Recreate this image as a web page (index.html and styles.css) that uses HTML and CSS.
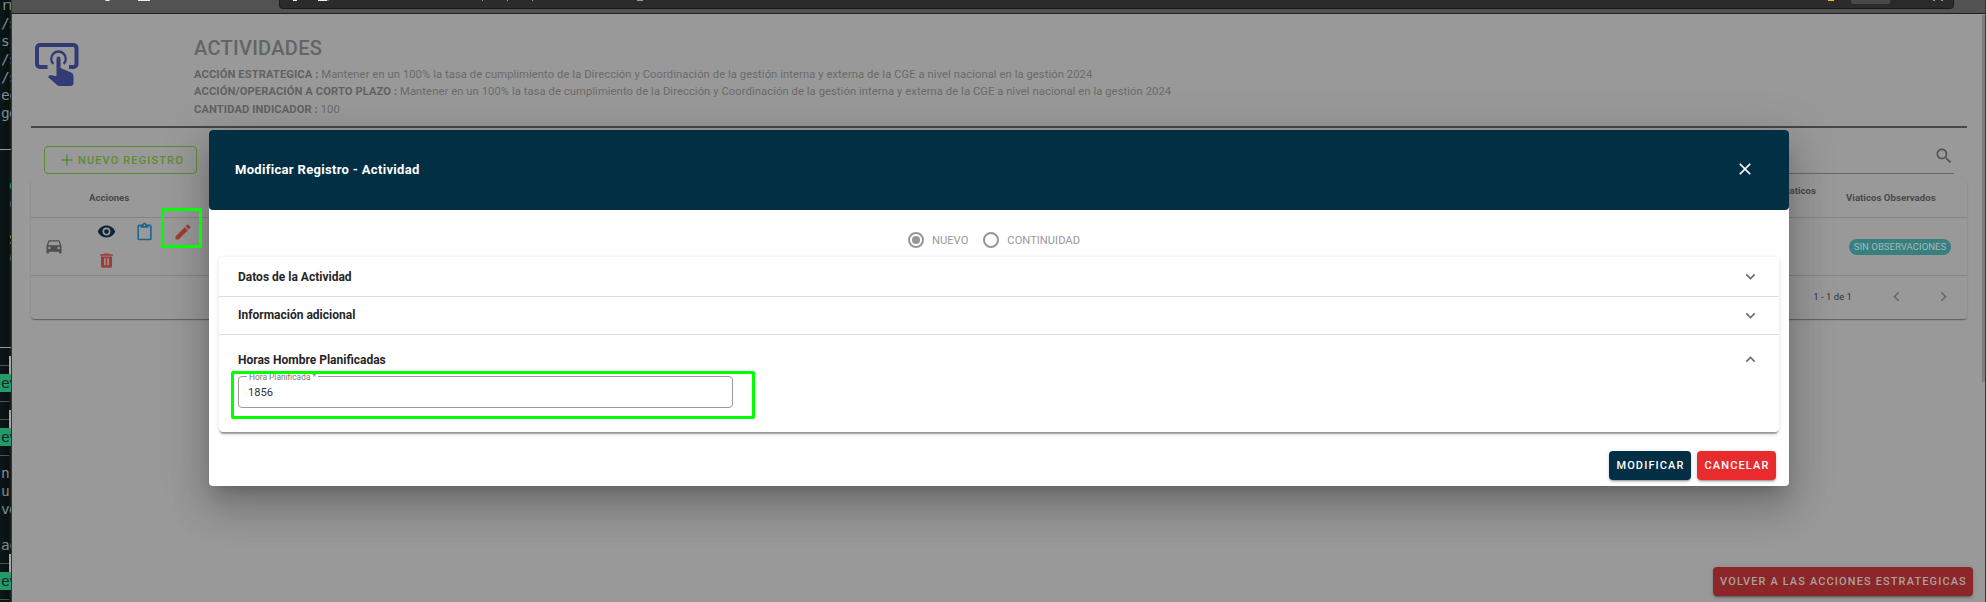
FILE: index.html
```html
<!DOCTYPE html>
<html lang="es">
<head>
<meta charset="utf-8">
<title>Actividades</title>
<link rel="stylesheet" href="styles.css">
</head>
<body>
<div class="desktop">
  <aside class="terminal">
    <div class="row">rm</div>
    <div class="row">/s</div>
    <div class="row">s.</div>
    <div class="row">/s</div>
    <div class="row">/s</div>
    <div class="row">ec</div>
    <div class="row">go</div>
    <div class="row"></div>
    <div class="row rule bright"></div>
    <div class="row"></div>
    <div class="row green">&nbsp;o</div>
    <div class="row dim">&nbsp;o</div>
    <div class="row"></div>
    <div class="row amber">&nbsp;S</div>
    <div class="row dim">&nbsp;o</div>
    <div class="row"></div>
    <div class="row"></div>
    <div class="row"></div>
    <div class="row"></div>
    <div class="row rule bright"></div>
    <div class="row rule bar"></div>
    <div class="row tag">ev</div>
    <div class="row rule"></div>
    <div class="row rule bar"></div>
    <div class="row tag">ev</div>
    <div class="row rule"></div>
    <div class="row">n</div>
    <div class="row">u</div>
    <div class="row">ve</div>
    <div class="row"></div>
    <div class="row">ac</div>
    <div class="row rule bar"></div>
    <div class="row tag">ev</div>
    <div class="row rule"></div>
  </aside>

  <div class="browser">
    <svg class="toolbar" width="1974" height="14" viewBox="12 0 1974 14">
      <rect x="12" width="1974" height="14" fill="#525252"/>
      <path d="M279.5-5V5.500a3 3 0 0 0 3 3H1950.500a3 3 0 0 0 3-3V-5" fill="#2b2b2b" stroke="#191919"/>
      <rect x="12" y="13" width="1974" height="1" fill="#1f1f1f"/>
      <path d="M105 0h5l-1 1h-3zM138 0h12v1h-12zM293 0h4v1h-4zM318 0h10v1h-10z" fill="#eee"/>
      <rect x="327" width="2" height="1" fill="#d0344a"/>
      <path d="M482 0h1v1h-1zM507 0h1v1h-1zM532 0h1v1h-1zM637 0h6v1h-6zM1933 0h2v1h-2zM1941 0h2v1h-2z" fill="#999"/>
      <rect x="1828" width="6" height="1" fill="#f2c100"/>
      <rect x="1851" y="-6" width="39" height="10" rx="2" fill="#494949"/>
    </svg>

    <main class="page">
      <header class="page-head">
        <svg class="logo" width="44" height="44" viewBox="0 0 44 44">
          <path d="M12.500 24H5a3 3 0 0 1-3-3V5a3 3 0 0 1 3-3H38.500a3 3 0 0 1 3 3V21a3 3 0 0 1-3 3H34" fill="none" stroke="#333b75" stroke-width="4"/>
          <path d="M18.300 20.900a7.300 7.300 0 1 1 10.400 0" fill="none" stroke="#333b75" stroke-width="2.300"/>
          <path d="M21.500 15.500a2 2 0 0 1 4 0V25l10.500 4.500a4 4 0 0 1 2.500 3.500V40a3 3 0 0 1-3 3H24.500a4 4 0 0 1-2.500-1L13 34l1-1.200a2.500 2.500 0 0 1 2.500-.6l5 1z" fill="#333b75"/>
        </svg>
        <div class="heading">
          <h1>ACTIVIDADES</h1>
          <p><b>ACCIÓN ESTRATEGICA :</b> Mantener en un 100% la tasa de cumplimiento de la Dirección y Coordinación de la gestión interna y externa de la CGE a nivel nacional en la gestión 2024</p>
          <p><b>ACCIÓN/OPERACIÓN A CORTO PLAZO :</b> Mantener en un 100% la tasa de cumplimiento de la Dirección y Coordinación de la gestión interna y externa de la CGE a nivel nacional en la gestión 2024</p>
          <p><b>CANTIDAD INDICADOR :</b> 100</p>
        </div>
      </header>

      <div class="tools">
        <button class="btn-new">
          <svg width="12" height="12" viewBox="0 0 12 12"><path d="M6 .5v11M.5 6h11" stroke="#5c8b34" stroke-width="1.500"/></svg>
          NUEVO REGISTRO
        </button>
        <div class="search">
          <svg width="20" height="20" viewBox="0 0 24 24"><path d="M15.500 14h-.79l-.28-.27C15.410 12.590 16 11.110 16 9.500 16 5.910 13.090 3 9.500 3S3 5.910 3 9.500 5.910 16 9.500 16c1.610 0 3.090-.59 4.230-1.570l.27.28v.79l5 4.990L20.490 19l-4.990-5zm-6 0C7.010 14 5 11.990 5 9.500S7.010 5 9.500 5 14 7.010 14 9.500 11.990 14 9.500 14z"/></svg>
        </div>
      </div>

      <section class="table">
        <div class="tr th">
          <div></div><div class="col-actions">Acciones</div><div></div><div class="col-via">Viaticos<br>&nbsp;</div><div class="col-obs">Viaticos Observados</div>
        </div>
        <div class="tr td">
          <div class="car"><svg width="20" height="20" viewBox="0 0 24 24"><path d="M18.920 6.010C18.720 5.420 18.160 5 17.500 5h-11c-.66 0-1.210.42-1.420 1.010L3 12v8c0 .55.45 1 1 1h1c.55 0 1-.45 1-1v-1h12v1c0 .55.45 1 1 1h1c.55 0 1-.45 1-1v-8l-2.080-5.990zM6.500 16c-.83 0-1.500-.67-1.500-1.500S5.670 13 6.500 13s1.500.67 1.500 1.500S7.330 16 6.500 16zm11 0c-.83 0-1.500-.67-1.500-1.500s.67-1.500 1.500-1.500 1.500.67 1.500 1.500-.67 1.500-1.500 1.500zM5 11l1.500-4.500h11L19 11H5z"/></svg></div>
          <div class="actions">
            <svg width="19" height="19" viewBox="0 0 24 24" fill="#0b2533"><path d="M12 9a3 3 0 0 0-3 3 3 3 0 0 0 3 3 3 3 0 0 0 3-3 3 3 0 0 0-3-3m0 8a5 5 0 0 1-5-5 5 5 0 0 1 5-5 5 5 0 0 1 5 5 5 5 0 0 1-5 5m0-12.500C7 4.500 2.730 7.610 1 12c1.730 4.390 6 7.500 11 7.500s9.270-3.110 11-7.500c-1.730-4.390-6-7.500-11-7.500z"/></svg>
            <svg width="19" height="20" viewBox="0 0 24 24" preserveAspectRatio="none" fill="#1b6590"><path d="M19 3h-4.180C14.400 1.840 13.300 1 12 1s-2.400.84-2.820 2H5a2 2 0 0 0-2 2v15a2 2 0 0 0 2 2h14a2 2 0 0 0 2-2V5a2 2 0 0 0-2-2m-7 0a1 1 0 0 1 1 1 1 1 0 0 1-1 1 1 1 0 0 1-1-1 1 1 0 0 1 1-1M7 7h10V5h2v15H5V5h2v2z"/></svg>
            <svg width="20" height="20" viewBox="0 0 24 24" fill="#9c3e37"><path d="M20.710 7.040c.39-.39.39-1.040 0-1.410l-2.340-2.340c-.37-.39-1.020-.39-1.410 0l-1.840 1.830 3.750 3.750M3 17.250V21h3.750L17.810 9.930l-3.750-3.750L3 17.250z"/></svg>
            <svg width="19" height="19" viewBox="0 0 24 24" fill="#9c3e37"><path fill-rule="evenodd" d="M20 4h-4l-1-1H9L8 4H4v2h16M5 7v12a2 2 0 0 0 2 2h10a2 2 0 0 0 2-2V7zM9 9h2v9H9zM13 9h2v9h-2z"/></svg>
          </div>
          <div></div><div></div>
          <div class="obs"><span class="chip">SIN OBSERVACIONES</span></div>
        </div>
        <div class="pager">
          <span>1 - 1 de 1</span>
          <svg width="19" height="19" viewBox="0 0 24 24"><path d="M15.410 16.580L10.830 12l4.580-4.590L14 6l-6 6 6 6z"/></svg>
          <svg width="19" height="19" viewBox="0 0 24 24"><path d="M8.590 16.580L13.170 12 8.590 7.410 10 6l6 6-6 6z"/></svg>
        </div>
      </section>

      <footer class="page-foot"><button class="btn back">VOLVER A LAS ACCIONES ESTRATEGICAS</button></footer>
    </main>
    <div class="scrollbar"></div>
  </div>
</div>

<div class="dialog">
  <div class="dialog-head">
    <h2>Modificar Registro - Actividad</h2>
    <svg width="20" height="20" viewBox="0 0 24 24" fill="#fff"><path d="M19 6.410L17.590 5 12 10.590 6.410 5 5 6.410 10.590 12 5 17.590 6.410 19 12 13.410 17.590 19 19 17.590 13.410 12z"/></svg>
  </div>
  <div class="dialog-body">
    <div class="radios">
      <span class="radio on"></span><label>NUEVO</label>
      <span class="radio"></span><label>CONTINUIDAD</label>
    </div>
    <div class="panels">
      <div class="panel first"><h3>Datos de la Actividad</h3><svg width="19" height="19" viewBox="0 0 24 24"><path d="M7.410 8.580L12 13.170l4.590-4.590L18 10l-6 6-6-6z"/></svg></div>
      <div class="panel second"><h3>Información adicional</h3><svg width="19" height="19" viewBox="0 0 24 24"><path d="M7.410 8.580L12 13.170l4.590-4.590L18 10l-6 6-6-6z"/></svg></div>
      <div class="panel open"><h3>Horas Hombre Planificadas</h3><svg width="19" height="19" viewBox="0 0 24 24"><path d="M7.410 15.410L12 10.830l4.590 4.580L18 14l-6-6-6 6z"/></svg></div>
      <fieldset class="field"><legend>Hora Planificada *</legend><span>1856</span></fieldset>
    </div>
    <div class="dialog-actions">
      <button class="btn primary">MODIFICAR</button>
      <button class="btn danger">CANCELAR</button>
    </div>
  </div>
</div>

<div class="mark mark-edit"></div>
<div class="mark mark-hours"></div>
</body>
</html>
```
FILE: styles.css
```css
* { box-sizing: border-box; }
body { margin: 0; width: 1986px; height: 602px; overflow: hidden; position: relative; background: #999; font-family: Roboto, "Liberation Sans", sans-serif; }
h1, h2, h3, p { margin: 0; }
button { font-family: inherit; margin: 0; }
svg { display: block; flex: none; }

.desktop { display: flex; height: 602px; }

/* terminal strip behind the browser window */
.terminal { width: 12px; height: 602px; flex: none; overflow: hidden; background: linear-gradient(90deg, #0b171a, #09110f 80%, #1e2222); border-right: 1px solid #303636; font: 14.500px/18px "DejaVu Sans Mono", monospace; letter-spacing: -.8px; color: #7b8c8f; }
.row { height: 18px; padding-left: 1px; white-space: nowrap; display: flex; align-items: center; position: relative; }
.row:first-child { margin-top: -4px; }
.rule { padding: 0; }
.rule::before { content: ""; width: 9px; height: 1px; background: #4d5657; }
.rule.bright::before { width: 11px; background: #929b9c; }
.bar::after { content: ""; width: 2px; height: 18px; background: #a5a5a5; }
.tag { background: #26996a; color: #0c2a22; }
.green { color: #26996a; }
.dim { color: #55595c; }
.amber { color: #c18a10; }

/* browser window */
.browser { width: 1974px; height: 602px; position: relative; background: #999; border-right: 1px solid #353838; overflow: hidden; }
.page { height: 588px; padding: 0 18px 0 19px; display: flex; flex-direction: column; }
.scrollbar { position: absolute; right: 0; top: 15px; width: 3px; height: 367px; background: #7a7f82; border-radius: 1px; }

.page-head { height: 114px; display: flex; padding: 20px 0 0 4px; border-bottom: 2px solid #494545; flex: none; }
.logo { margin-top: 9px; }
.heading { margin-left: 115px; color: #6a6a6a; }
.heading h1 { font-size: 20px; line-height: 28px; font-weight: 500; letter-spacing: .3px; color: #646464; }
.heading p { font-size: 11.200px; line-height: 17.700px; letter-spacing: .085px; white-space: nowrap; position: relative; top: 3.500px; }
.heading b { color: #626262; }

.tools { height: 52px; display: flex; justify-content: space-between; padding: 18px 13px 0; flex: none; }
.btn-new { width: 153px; height: 28px; border: 1px solid #5c8b34; border-radius: 4px; background: none; color: #5c8b34; font-size: 11px; font-weight: 500; letter-spacing: 1.120px; display: flex; align-items: center; gap: 5px; padding: 0 0 0 16px; white-space: nowrap; }
.search { width: 500px; height: 28px; border-bottom: 1px solid #676767; display: flex; justify-content: flex-end; fill: #545454; }

.table { height: 139px; border-radius: 4px; box-shadow: 0 2px 1px -1px rgba(0,0,0,.22), 0 1px 1px rgba(0,0,0,.16), 0 1px 3px rgba(0,0,0,.08); font-size: 9.700px; color: #4a4a4a; flex: none; }
.tr { display: grid; grid-template-columns: 45px 130px 1fr 105px 152px; align-items: center; border-bottom: 1px solid #838383; }
.th { height: 38px; font-weight: 700; padding-bottom: 2px; }
.th > div { white-space: nowrap; }
.col-actions { padding-left: 13px; }
.col-via { width: 106px; text-align: right; line-height: 14px; }
.col-obs { padding-left: 31px; }
.td { height: 58px; }
.car { padding: 0 0 1px 13px; fill: #4f4f4f; }
.actions { display: grid; grid-template-columns: 38px 38px 20px; row-gap: 9px; align-items: center; padding: 0 0 2px 21px; }
.obs { padding-left: 34px; }
.chip { display: block; width: 102px; height: 16px; border-radius: 8px; background: #388080; color: #a3b8b8; font-size: 9.600px; line-height: 16px; text-align: center; white-space: nowrap; }
.pager { height: 41px; display: flex; align-items: center; justify-content: flex-end; color: #333; fill: #686868; font-size: 9.600px; padding-right: 14px; }
.pager span { margin-right: 35px; }
.pager svg + svg { margin-left: 28px; }

.page-foot { margin-top: auto; display: flex; justify-content: flex-end; padding: 0 0 6px; margin-right: -6px; }

.btn { height: 29px; border: 0; border-radius: 4px; font-size: 11px; font-weight: 500; letter-spacing: 1.120px; padding: 0 0 0 1px; text-align: center; white-space: nowrap; color: #fff; box-shadow: 0 3px 1px -2px rgba(0,0,0,.2), 0 2px 2px rgba(0,0,0,.14), 0 1px 5px rgba(0,0,0,.12); }
.back { width: 260px; background: #8c2628; color: #aaa1a1; }
.primary { width: 82px; background: #032f44; }
.danger { width: 79px; background: #e82c2e; }

/* dialog */
.dialog { position: absolute; left: 209px; top: 130px; width: 1580px; height: 356px; background: #fff; border-radius: 4px; box-shadow: 0 11px 15px -7px rgba(0,0,0,.2), 0 24px 38px 3px rgba(0,0,0,.14), 0 9px 46px 8px rgba(0,0,0,.12); }
.dialog-head { height: 80px; background: #032f44; border-radius: 4px; display: flex; align-items: center; justify-content: space-between; padding: 0 34px 2px 26px; color: #fff; }
.dialog-head h2 { font-size: 13px; font-weight: 700; letter-spacing: .32px; }
.dialog-body { padding: 0 10px; }
.radios { height: 47px; display: flex; align-items: center; padding: 13px 0 0 689px; font-size: 11.200px; color: #999; }
.radio { width: 16px; height: 16px; border: 2px solid #979797; border-radius: 50%; display: flex; align-items: center; justify-content: center; margin-right: 8px; }
.radio.on::after { content: ""; width: 8px; height: 8px; border-radius: 50%; background: #979797; }
.radios label { margin-right: 15px; }
.panels { height: 176px; border-radius: 4px; box-shadow: 0 3px 1px -2px rgba(0,0,0,.2), 0 2px 2px -1px rgba(0,0,0,.14), 0 1px 5px rgba(0,0,0,.12); border-bottom: 1px solid #999; }
.panel { display: flex; align-items: center; justify-content: space-between; padding: 0 19px; border-bottom: 1px solid #dedede; fill: #6b6b6b; }
.panel h3 { font-size: 12px; font-weight: 700; color: #262626; }
.first { height: 40px; }
.second { height: 38px; padding-bottom: 1px; }
.open { height: 42px; border: 0; padding-top: 7px; }
.field { margin: -6px 0 0 19px; width: 495px; height: 37px; border: 1px solid #999; border-radius: 4px; padding: 0 9px; min-width: 0; }
.field legend { font-size: 8.400px; line-height: 12px; height: 10px; color: #777; padding: 0 2px; margin-left: -1px; }
.field span { display: block; font-size: 11.200px; line-height: 14px; color: #333; margin-top: 5px; }
.dialog-actions { display: flex; justify-content: flex-end; gap: 6px; padding: 18px 3px 0 0; }

/* highlight rectangles */
.mark { position: absolute; border: 3px solid #0f0; border-radius: 2px; }
.mark-edit { left: 161px; top: 208px; width: 41px; height: 40px; }
.mark-hours { left: 231px; top: 371px; width: 524px; height: 48px; }
```
